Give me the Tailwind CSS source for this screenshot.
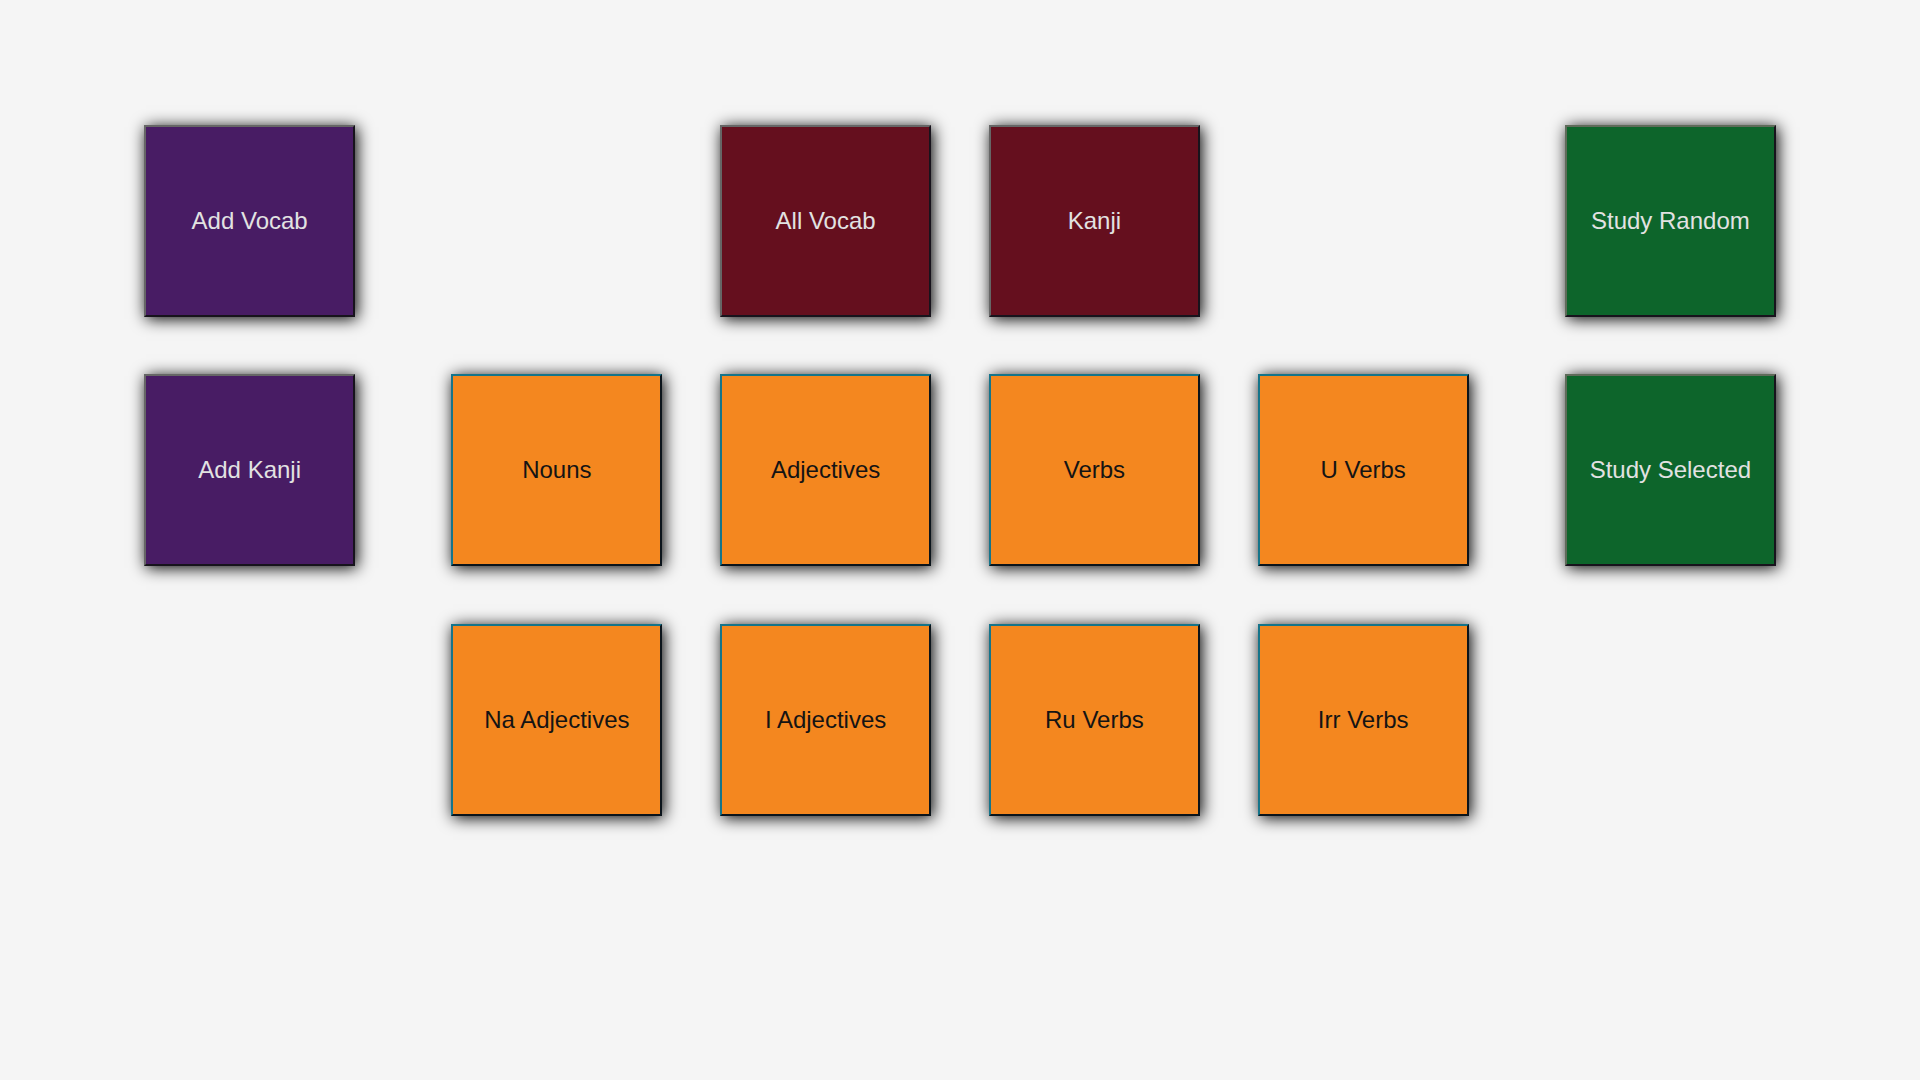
<!DOCTYPE html>
<html lang="en">
<head>
<meta charset="utf-8">
<meta name="viewport" content="width=device-width, initial-scale=1">
<title>Japanese Study</title>
<script src="https://cdn.jsdelivr.net/npm/@tailwindcss/browser@4"></script>
</head>
<body class="min-h-screen bg-[#f5f5f5] font-['Liberation_Sans',Arial,sans-serif] text-2xl">
<main class="flex justify-center gap-[5vw] pt-[125px] pb-16">
  <nav aria-label="Add" class="flex w-[11vw] flex-col gap-[57px]">
    <button type="button" class="h-48 border-2 border-t-[#666666] border-l-[#666666] border-r-[#17131c] border-b-[#17131c] bg-[#481c64] text-[#e2e2e2] shadow-[2px_2px_15px_#000]">Add Vocab</button>
    <button type="button" class="h-48 border-2 border-t-[#666666] border-l-[#666666] border-r-[#17131c] border-b-[#17131c] bg-[#481c64] text-[#e2e2e2] shadow-[2px_2px_15px_#000]">Add Kanji</button>
  </nav>
  <section aria-label="Word lists" class="flex flex-col gap-[57px]">
    <div class="grid grid-cols-[repeat(2,11vw)] justify-center gap-x-[3vw]">
      <button type="button" class="h-48 border-2 border-t-[#666666] border-l-[#666666] border-r-[#17131c] border-b-[#17131c] bg-[#650f1e] text-[#e2e2e2] shadow-[2px_2px_15px_#000]">All Vocab</button>
      <button type="button" class="h-48 border-2 border-t-[#666666] border-l-[#666666] border-r-[#17131c] border-b-[#17131c] bg-[#650f1e] text-[#e2e2e2] shadow-[2px_2px_15px_#000]">Kanji</button>
    </div>
    <div class="grid grid-cols-[repeat(4,11vw)] gap-x-[3vw] gap-y-[58px]">
      <button type="button" class="h-48 border-2 border-t-[#15748a] border-l-[#15748a] border-r-[#0b141b] border-b-[#0b141b] bg-[#f4871f] text-[#141414] shadow-[2px_2px_15px_#000]">Nouns</button>
      <button type="button" class="h-48 border-2 border-t-[#15748a] border-l-[#15748a] border-r-[#0b141b] border-b-[#0b141b] bg-[#f4871f] text-[#141414] shadow-[2px_2px_15px_#000]">Adjectives</button>
      <button type="button" class="h-48 border-2 border-t-[#15748a] border-l-[#15748a] border-r-[#0b141b] border-b-[#0b141b] bg-[#f4871f] text-[#141414] shadow-[2px_2px_15px_#000]">Verbs</button>
      <button type="button" class="h-48 border-2 border-t-[#15748a] border-l-[#15748a] border-r-[#0b141b] border-b-[#0b141b] bg-[#f4871f] text-[#141414] shadow-[2px_2px_15px_#000]">U Verbs</button>
      <button type="button" class="h-48 border-2 border-t-[#15748a] border-l-[#15748a] border-r-[#0b141b] border-b-[#0b141b] bg-[#f4871f] text-[#141414] shadow-[2px_2px_15px_#000]">Na Adjectives</button>
      <button type="button" class="h-48 border-2 border-t-[#15748a] border-l-[#15748a] border-r-[#0b141b] border-b-[#0b141b] bg-[#f4871f] text-[#141414] shadow-[2px_2px_15px_#000]">I Adjectives</button>
      <button type="button" class="h-48 border-2 border-t-[#15748a] border-l-[#15748a] border-r-[#0b141b] border-b-[#0b141b] bg-[#f4871f] text-[#141414] shadow-[2px_2px_15px_#000]">Ru Verbs</button>
      <button type="button" class="h-48 border-2 border-t-[#15748a] border-l-[#15748a] border-r-[#0b141b] border-b-[#0b141b] bg-[#f4871f] text-[#141414] shadow-[2px_2px_15px_#000]">Irr Verbs</button>
    </div>
  </section>
  <nav aria-label="Study" class="flex w-[11vw] flex-col gap-[57px]">
    <button type="button" class="h-48 border-2 border-t-[#5f6b5a] border-l-[#5f6b5a] border-r-[#17131c] border-b-[#17131c] bg-[#0d652b] text-[#e2e2e2] shadow-[2px_2px_15px_#000]">Study Random</button>
    <button type="button" class="h-48 border-2 border-t-[#5f6b5a] border-l-[#5f6b5a] border-r-[#17131c] border-b-[#17131c] bg-[#0d652b] text-[#e2e2e2] shadow-[2px_2px_15px_#000]">Study Selected</button>
  </nav>
</main>
</body>
</html>
